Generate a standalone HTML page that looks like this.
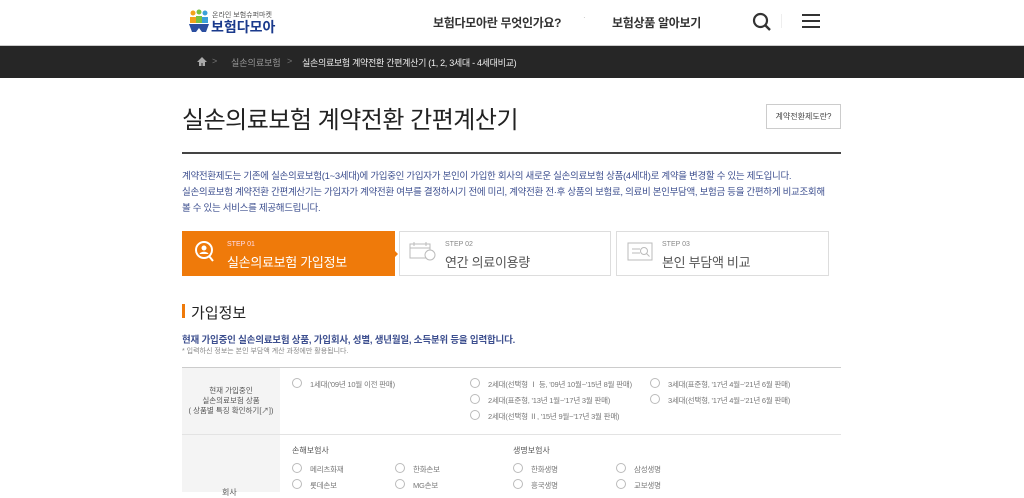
<!DOCTYPE html>
<html><head><meta charset="utf-8"><style>
*{margin:0;padding:0;box-sizing:border-box}
body{width:1024px;height:492px;overflow:hidden;background:#fff;font-family:"Liberation Sans","Noto Sans CJK KR",sans-serif;color:#333;position:relative}
.a{position:absolute;white-space:nowrap}
.r{display:inline-block;width:10px;height:10px;border:1px solid #bbb;border-radius:50%;vertical-align:-1px;margin-right:8px}
.o{font-size:7.5px;color:#777;letter-spacing:-0.2px}
</style></head><body>
<div class="a" style="left:188px;top:9px">
<svg width="22" height="24" viewBox="0 0 22 24"><circle cx="5" cy="4" r="2.5" fill="#f2a21b"/><circle cx="11" cy="3" r="2.5" fill="#79c142"/><circle cx="17" cy="4" r="2.5" fill="#3aa0d8"/><rect x="2" y="8" width="6" height="6" fill="#f2a21b"/><rect x="8" y="7" width="6" height="7" fill="#79c142"/><rect x="14" y="8" width="6" height="6" fill="#3aa0d8"/><path d="M1 15h20l-3 8h-4l-3-4-3 4H4z" fill="#2a4ea0"/></svg></div>
<div class="a" style="left:212px;top:10px;font-size:7px;color:#555">온라인 보험슈퍼마켓</div>
<div class="a" style="left:211px;top:17px;font-size:14px;font-weight:bold;color:#1a3a8c">보험다모아</div>
<div class="a" style="left:433px;top:14px;font-size:12px;font-weight:bold;color:#333;letter-spacing:-0.3px">보험다모아란 무엇인가요?</div>
<div class="a" style="left:583px;top:13px;font-size:8px;color:#bbb">·</div>
<div class="a" style="left:612px;top:14px;font-size:12px;font-weight:bold;color:#333;letter-spacing:-0.3px">보험상품 알아보기</div>
<svg class="a" style="left:752px;top:12px" width="20" height="20" viewBox="0 0 20 20"><circle cx="8.5" cy="8.5" r="6.5" fill="none" stroke="#333" stroke-width="2.2"/><path d="M13 13l5 5" stroke="#333" stroke-width="2.4"/></svg>
<div class="a" style="left:781px;top:14px;width:1px;height:14px;background:#eee"></div>
<svg class="a" style="left:802px;top:13px" width="18" height="16"><path d="M0 2h18M0 8h18M0 14h18" stroke="#333" stroke-width="2"/></svg>
<div class="a" style="left:0;top:45px;width:1024px;height:33px;background:#262626;border-top:1px solid #ccc"></div>
<svg class="a" style="left:197px;top:57px" width="10" height="9"><path d="M5 0L0 5h2v4h2.5V6h1v3H8V5h2z" fill="#aaa"/></svg>
<div class="a" style="left:212px;top:56px;font-size:9px;color:#777">&gt;</div>
<div class="a" style="left:231px;top:56px;font-size:9px;color:#999">실손의료보험</div>
<div class="a" style="left:287px;top:56px;font-size:9px;color:#777">&gt;</div>
<div class="a" style="left:302px;top:56px;font-size:9px;color:#eee;letter-spacing:-0.3px">실손의료보험 계약전환 간편계산기 (1, 2, 3세대 - 4세대비교)</div>
<div class="a" style="left:182px;top:100px;font-size:24px;color:#222;letter-spacing:-0.5px">실손의료보험 계약전환 간편계산기</div>
<div class="a" style="left:766px;top:104px;width:75px;height:25px;border:1px solid #ccc;font-size:8px;color:#444;text-align:center;line-height:23px">계약전환제도란?</div>
<div class="a" style="left:182px;top:152px;width:659px;height:2px;background:#444"></div>
<div class="a" style="left:182px;top:169px;font-size:9.5px;line-height:16px;color:#3d4f8f;letter-spacing:-0.3px">계약전환제도는 기존에 실손의료보험(1~3세대)에 가입중인 가입자가 본인이 가입한 회사의 새로운 실손의료보험 상품(4세대)로 계약을 변경할 수 있는 제도입니다.<br>실손의료보험 계약전환 간편계산기는 가입자가 계약전환 여부를 결정하시기 전에 미리, 계약전환 전·후 상품의 보험료, 의료비 본인부담액, 보험금 등을 간편하게 비교조회해<br>볼 수 있는 서비스를 제공해드립니다.</div>
<div class="a" style="left:182px;top:231px;width:213px;height:45px;background:#ef7a0a"></div>
<div class="a" style="left:393px;top:249px;width:0;height:0;border-left:5px solid #ef7a0a;border-top:5px solid transparent;border-bottom:5px solid transparent"></div>
<svg class="a" style="left:194px;top:240px" width="22" height="24"><circle cx="10" cy="10" r="8" fill="none" stroke="#fff" stroke-width="2"/><circle cx="10" cy="8" r="2.5" fill="#fff"/><path d="M5.5 14c1-3 8-3 9 0" fill="#fff"/><path d="M15 16l4 5" stroke="#fff" stroke-width="2"/></svg>
<div class="a" style="left:227px;top:241px;font-size:7px;color:#fde">STEP 01</div>
<div class="a" style="left:227px;top:252px;font-size:13px;color:#fff;letter-spacing:-0.3px">실손의료보험 가입정보</div>
<div class="a" style="left:399px;top:231px;width:212px;height:45px;border:1px solid #ddd"></div>
<svg class="a" style="left:409px;top:242px" width="28" height="20"><rect x="1" y="2" width="20" height="14" fill="none" stroke="#bbb"/><path d="M1 6h20M5 0v4M17 0v4" stroke="#bbb"/><circle cx="21" cy="13" r="5" fill="#fff" stroke="#bbb"/></svg>
<div class="a" style="left:445px;top:241px;font-size:7px;color:#888">STEP 02</div>
<div class="a" style="left:445px;top:252px;font-size:13px;color:#555;letter-spacing:-0.3px">연간 의료이용량</div>
<div class="a" style="left:616px;top:231px;width:213px;height:45px;border:1px solid #ddd"></div>
<svg class="a" style="left:627px;top:242px" width="28" height="20"><rect x="1" y="1" width="24" height="17" fill="none" stroke="#bbb"/><path d="M5 7h8M5 11h8" stroke="#bbb"/><circle cx="17" cy="9" r="3.5" fill="none" stroke="#bbb"/><path d="M19.5 11.5l3 3" stroke="#bbb"/></svg>
<div class="a" style="left:662px;top:241px;font-size:7px;color:#888">STEP 03</div>
<div class="a" style="left:662px;top:252px;font-size:13px;color:#555;letter-spacing:-0.3px">본인 부담액 비교</div>
<div class="a" style="left:182px;top:304px;width:3px;height:14px;background:#ef7a0a"></div>
<div class="a" style="left:191px;top:302px;font-size:15px;color:#222">가입정보</div>
<div class="a" style="left:182px;top:332px;font-size:9.5px;font-weight:bold;color:#3d4f8f;letter-spacing:-0.2px">현재 가입중인 실손의료보험 상품, 가입회사, 성별, 생년월일, 소득분위 등을 입력합니다.</div>
<div class="a" style="left:182px;top:346px;font-size:7px;color:#888">* 입력하신 정보는 본인 부담액 계산 과정에만 활용됩니다.</div>
<div class="a" style="left:182px;top:367px;width:659px;height:1px;background:#ccc"></div>
<div class="a" style="left:182px;top:368px;width:98px;height:124px;background:#f4f4f4"></div>
<div class="a" style="left:182px;top:434px;width:659px;height:1px;background:#e3e3e3"></div>
<div class="a" style="left:182px;top:386px;width:98px;text-align:center;font-size:7.5px;line-height:10px;color:#555">현재 가입중인<br>실손의료보험 상품<br>( 상품별 특징 확인하기[↗])</div>
<div class="a o" style="left:292px;top:378px"><span class="r"></span>1세대('09년 10월 이전 판매)</div>
<div class="a o" style="left:470px;top:378px"><span class="r"></span>2세대(선택형 Ⅰ 등, '09년 10월~'15년 8월 판매)</div>
<div class="a o" style="left:470px;top:394px"><span class="r"></span>2세대(표준형, '13년 1월~'17년 3월 판매)</div>
<div class="a o" style="left:470px;top:410px"><span class="r"></span>2세대(선택형 Ⅱ, '15년 9월~'17년 3월 판매)</div>
<div class="a o" style="left:650px;top:378px"><span class="r"></span>3세대(표준형, '17년 4월~'21년 6월 판매)</div>
<div class="a o" style="left:650px;top:394px"><span class="r"></span>3세대(선택형, '17년 4월~'21년 6월 판매)</div>
<div class="a" style="left:292px;top:445px;font-size:8px;color:#555">손해보험사</div>
<div class="a" style="left:513px;top:445px;font-size:8px;color:#555">생명보험사</div>
<div class="a o" style="left:292px;top:463px"><span class="r"></span>메리츠화재</div>
<div class="a o" style="left:395px;top:463px"><span class="r"></span>한화손보</div>
<div class="a o" style="left:513px;top:463px"><span class="r"></span>한화생명</div>
<div class="a o" style="left:616px;top:463px"><span class="r"></span>삼성생명</div>
<div class="a o" style="left:292px;top:479px"><span class="r"></span>롯데손보</div>
<div class="a o" style="left:395px;top:479px"><span class="r"></span>MG손보</div>
<div class="a o" style="left:513px;top:479px"><span class="r"></span>흥국생명</div>
<div class="a o" style="left:616px;top:479px"><span class="r"></span>교보생명</div>
<div class="a" style="left:222px;top:487px;font-size:8px;color:#555">회사</div>
</body></html>
